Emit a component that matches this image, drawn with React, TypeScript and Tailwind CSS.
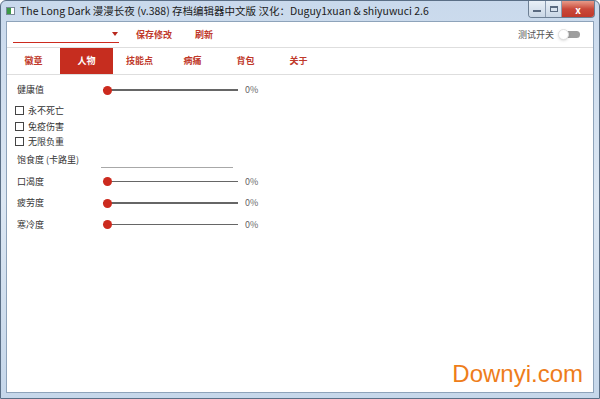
const font = { fontFamily: '"Noto Sans CJK SC", "Noto Sans", sans-serif' }

const tabs = ['徽章', '人物', '技能点', '病痛', '背包', '关于']

function Slider({ label }: { label: string }) {
  return (
    <div className="flex items-center h-[20px]">
      <span className="w-[88px] pl-[2px] text-[9px] text-[#333]">{label}</span>
      <div className="relative w-[135px] h-[10px] flex items-center">
        <div className="w-full h-[1.5px] bg-[#666]" />
        <div className="absolute left-0 top-[0.5px] w-[9px] h-[9px] rounded-full bg-[#cc2a1e]" />
      </div>
      <span className="ml-[7px] text-[9px] text-[#666]">0%</span>
    </div>
  )
}

function Check({ label }: { label: string }) {
  return (
    <div className="flex items-center h-[15.5px] gap-[4px]">
      <div className="w-[9px] h-[9px] border border-[#444] bg-white" />
      <span className="text-[9px] text-[#333]">{label}</span>
    </div>
  )
}

export default function App() {
  return (
    <div
      className="w-[600px] h-[399px] flex flex-col bg-gradient-to-b from-[#c9d9ec] via-[#dce7f3] to-[#c6d7ea] border border-[#5b6f86] rounded-t-[6px] overflow-hidden"
      style={font}
    >
      {/* 标题栏 */}
      <div className="h-[20px] flex items-start shrink-0">
        <div className="flex items-center h-[19px] pl-[5px] gap-[5px]">
          <div className="w-[9px] h-[8px] border border-[#7a8a99] bg-white flex">
            <div className="w-[4px] h-full bg-[#3c9a46]" />
          </div>
          <span className="text-[10.5px] text-[#1b1b1b] whitespace-nowrap">
            The Long Dark 漫漫长夜 (v.388) 存档编辑器中文版 汉化：Duguy1xuan &amp; shiyuwuci 2.6
          </span>
        </div>
        <div className="ml-auto mr-[4px] flex h-[17px] border border-t-0 border-[#6d7f94] rounded-b-[4px] overflow-hidden">
          <div className="w-[17px] bg-gradient-to-b from-[#e9f0f7] to-[#c9d6e5] flex items-end justify-center pb-[5px] border-r border-[#8b9bb0]">
            <div className="w-[8px] h-[2px] bg-[#5a6a80]" />
          </div>
          <div className="w-[16px] bg-gradient-to-b from-[#e9f0f7] to-[#c9d6e5] flex items-center justify-center border-r border-[#8b9bb0]">
            <div className="w-[8px] h-[6px] border border-[#5a6a80] border-t-2" />
          </div>
          <div className="w-[32px] bg-gradient-to-b from-[#e79a89] via-[#c9483a] to-[#c0392b] flex items-center justify-center text-white text-[10px] font-bold">
            x
          </div>
        </div>
      </div>

      {/* 客户区 */}
      <div className="flex-1 mx-[5px] mb-[5px] bg-white border border-[#8ea3ba] flex flex-col">
        <div className="h-[25px] flex items-center shrink-0">
          <div className="ml-[6px] w-[106px] h-[16px] border-b border-[#cc2a1e] flex items-center justify-end pr-[1px]">
            <svg width="6" height="4" viewBox="0 0 6 4">
              <path d="M0 0h6L3 4z" fill="#b8281d" />
            </svg>
          </div>
          <span className="ml-[17px] text-[9px] font-bold text-[#c0392b]">保存修改</span>
          <span className="ml-[23px] text-[9px] font-bold text-[#c0392b]">刷新</span>
          <span className="ml-auto text-[9px] text-[#555]">测试开关</span>
          <div className="ml-[4px] mr-[13px] w-[22px] h-[10px] flex items-center relative">
            <div className="w-full h-[7px] rounded-full bg-[#9e9e9e] ml-[4px]" />
            <div className="absolute left-0 w-[11px] h-[11px] rounded-full bg-white border border-[#e0e0e0] shadow-sm" />
          </div>
        </div>
        <div className="h-px bg-[#dedede]" />
        <div className="h-[26px] flex shrink-0">
          {tabs.map((t, i) => (
            <div
              key={t}
              className={
                i === 1
                  ? 'w-[53px] flex items-center justify-center text-[9px] font-bold bg-[#c62d1f] text-white'
                  : 'w-[53px] flex items-center justify-center text-[9px] font-bold text-[#c0392b]'
              }
            >
              {t}
            </div>
          ))}
        </div>
        <div className="h-px bg-[#dedede]" />

        <div className="flex-1 flex flex-col pl-[8px] pt-[5px] relative">
          <Slider label="健康值" />
          <div className="mt-[3px] flex flex-col">
            <Check label="永不死亡" />
            <Check label="免疫伤害" />
            <Check label="无限负重" />
          </div>
          <div className="mt-[3px] flex items-center h-[14px]">
            <span className="pl-[2px] text-[9px] text-[#333]">饱食度 (卡路里)</span>
          </div>
          <div className="ml-[86px] w-[132px] h-px bg-[#a8a8a8]" />
          <div className="mt-[4px] flex flex-col gap-[1.5px]">
            <Slider label="口渴度" />
            <Slider label="疲劳度" />
            <Slider label="寒冷度" />
          </div>
          <div className="mt-auto mb-0 mr-[10px] self-end text-[24px] text-[#ee7d1b]" style={{ fontFamily: '"Liberation Sans", Arial, sans-serif' }}>
            Downyi.com
          </div>
        </div>
      </div>
    </div>
  )
}
